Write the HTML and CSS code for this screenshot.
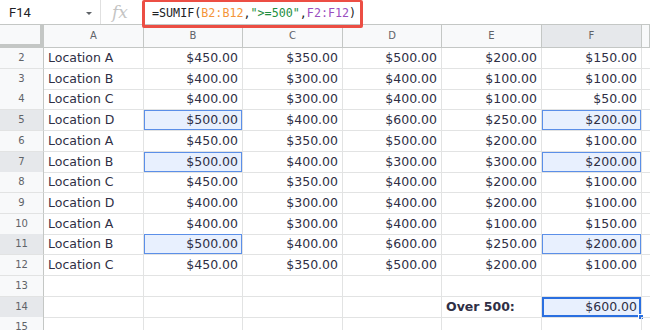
FILE: index.html
```html
<!DOCTYPE html>
<html lang="en">
<head>
    <meta charset="UTF-8">
    <title>Sheet - SUMIF</title>
    <link rel="stylesheet" href="styles.css">
</head>
<body>
    <div id="sheet">
        <!-- Formula bar -->
        <div class="formula-bar">
            <div class="name-box">F14<span class="caret"></span></div>
            <div class="fx">fx</div>
            <div class="formula"><span>=SUMIF(</span><span class="ref-b">B2:B12</span><span>,</span><span class="str">"&gt;=500"</span><span>,</span><span class="ref-f">F2:F12</span><span>)</span></div>
            <div class="annotation"></div>
        </div>

        <!-- Column headers -->
        <div class="row head">
            <div class="corner"></div>
            <div class="col">A</div>
            <div class="col">B</div>
            <div class="col">C</div>
            <div class="col">D</div>
            <div class="col">E</div>
            <div class="col sel">F</div>
            <div class="col"></div>
        </div>

        <div class="row"><div class="num">2</div><div class="cell">Location A</div><div class="cell r">$450.00</div><div class="cell r">$350.00</div><div class="cell r">$500.00</div><div class="cell r">$200.00</div><div class="cell r">$150.00</div><div class="cell"></div></div>
        <div class="row"><div class="num">3</div><div class="cell">Location B</div><div class="cell r">$400.00</div><div class="cell r">$300.00</div><div class="cell r">$400.00</div><div class="cell r">$100.00</div><div class="cell r">$100.00</div><div class="cell"></div></div>
        <div class="row"><div class="num">4</div><div class="cell">Location C</div><div class="cell r">$400.00</div><div class="cell r">$300.00</div><div class="cell r">$400.00</div><div class="cell r">$100.00</div><div class="cell r">$50.00</div><div class="cell"></div></div>
        <div class="row"><div class="num sel">5</div><div class="cell">Location D</div><div class="cell r hl">$500.00</div><div class="cell r">$400.00</div><div class="cell r">$600.00</div><div class="cell r">$250.00</div><div class="cell r hl">$200.00</div><div class="cell"></div></div>
        <div class="row"><div class="num">6</div><div class="cell">Location A</div><div class="cell r">$450.00</div><div class="cell r">$350.00</div><div class="cell r">$500.00</div><div class="cell r">$200.00</div><div class="cell r">$100.00</div><div class="cell"></div></div>
        <div class="row"><div class="num sel">7</div><div class="cell">Location B</div><div class="cell r hl">$500.00</div><div class="cell r">$400.00</div><div class="cell r">$300.00</div><div class="cell r">$300.00</div><div class="cell r hl">$200.00</div><div class="cell"></div></div>
        <div class="row"><div class="num">8</div><div class="cell">Location C</div><div class="cell r">$450.00</div><div class="cell r">$350.00</div><div class="cell r">$400.00</div><div class="cell r">$200.00</div><div class="cell r">$100.00</div><div class="cell"></div></div>
        <div class="row"><div class="num">9</div><div class="cell">Location D</div><div class="cell r">$400.00</div><div class="cell r">$300.00</div><div class="cell r">$400.00</div><div class="cell r">$200.00</div><div class="cell r">$100.00</div><div class="cell"></div></div>
        <div class="row"><div class="num">10</div><div class="cell">Location A</div><div class="cell r">$400.00</div><div class="cell r">$300.00</div><div class="cell r">$400.00</div><div class="cell r">$100.00</div><div class="cell r">$150.00</div><div class="cell"></div></div>
        <div class="row"><div class="num sel">11</div><div class="cell">Location B</div><div class="cell r hl">$500.00</div><div class="cell r">$400.00</div><div class="cell r">$600.00</div><div class="cell r">$250.00</div><div class="cell r hl">$200.00</div><div class="cell"></div></div>
        <div class="row"><div class="num">12</div><div class="cell">Location C</div><div class="cell r">$450.00</div><div class="cell r">$350.00</div><div class="cell r">$500.00</div><div class="cell r">$200.00</div><div class="cell r">$100.00</div><div class="cell"></div></div>
        <div class="row"><div class="num">13</div><div class="cell"></div><div class="cell"></div><div class="cell"></div><div class="cell"></div><div class="cell"></div><div class="cell"></div><div class="cell"></div></div>
        <div class="row"><div class="num sel">14</div><div class="cell"></div><div class="cell"></div><div class="cell"></div><div class="cell"></div><div class="cell b">Over 500:</div><div class="cell r active">$600.00<span class="handle"></span></div><div class="cell"></div></div>
        <div class="row"><div class="num">15</div><div class="cell"></div><div class="cell"></div><div class="cell"></div><div class="cell"></div><div class="cell"></div><div class="cell"></div><div class="cell"></div></div>
    </div>
</body>
</html>
```

FILE: styles.css
```css
* {
    box-sizing: border-box;
}
body {
    margin: 0;
    background: #fff;
    font-family: "DejaVu Sans", Verdana, sans-serif;
    color: #2f2f45;
    overflow: hidden;
}
#sheet {
    width: 650px;
}

/* formula bar */
.formula-bar {
    position: relative;
    display: flex;
    align-items: center;
    height: 25px;
    border-bottom: 1px solid #c4c7c5;
}
.name-box {
    position: relative;
    width: 101px;
    height: 100%;
    padding-left: 9px;
    display: flex;
    align-items: center;
    font-family: Roboto, "Liberation Sans", sans-serif;
    font-size: 13px;
    color: #202124;
    border-right: 1px solid #e0e0e0;
}
.caret {
    position: absolute;
    right: 8px;
    top: 12px;
    border-left: 3px solid transparent;
    border-right: 3px solid transparent;
    border-top: 3px solid #5f6368;
}
.fx {
    width: 41px;
    padding-left: 11px;
    font-family: "DejaVu Serif", "Liberation Serif", serif;
    font-style: italic;
    font-size: 17px;
    color: #c4c4c4;
}
.formula {
    padding-left: 10px;
    font-family: "DejaVu Sans Mono", "Liberation Mono", monospace;
    font-size: 11.7px;
    color: #202124;
    padding-top: 1px;
}
.ref-b { color: #f4953a; }
.str { color: #1e8e3e; }
.ref-f { color: #9a4fbf; }
.annotation {
    position: absolute;
    left: 142px;
    top: 0;
    width: 221px;
    height: 28px;
    border: 3px solid #ec4e44;
    border-top-width: 2px;
    border-radius: 2px;
}

/* grid */
.row {
    display: grid;
    grid-template-columns: 44px 100px 99px 100px 99px 100px 100px 1fr;
    height: 20.73px;
}
.row.head {
    height: 23px;
}
.corner {
    background: #f8f9fa;
    border-right: 4px solid #c4c7c5;
    border-bottom: 4px solid #c4c7c5;
}
.col {
    background: #f8f9fa;
    border-right: 1px solid #c4c7c5;
    border-bottom: 1px solid #c4c7c5;
    font-size: 10px;
    color: #5f6368;
    text-align: center;
    line-height: 22px;
}
.col.sel {
    background: #e6e8eb;
}
.num {
    background: #f8f9fa;
    border-right: 1px solid #c4c7c5;
    border-bottom: 1px solid #e2e3e3;
    font-size: 10px;
    color: #5f6368;
    text-align: center;
    line-height: 20px;
}
.num.sel {
    background: #e6e8eb;
}
.cell {
    position: relative;
    border-right: 1px solid #e2e3e3;
    border-bottom: 1px solid #e2e3e3;
    font-size: 12.5px;
    line-height: 20px;
    padding: 0 4px;
    white-space: nowrap;
}
.cell.r {
    text-align: right;
}
.cell.b {
    font-weight: bold;
}
.cell.hl {
    background: #e8f0fe;
    box-shadow: inset 0 0 0 1px #5b8fe8;
}
.cell.active {
    background: #e8f0fe;
    box-shadow: inset 0 0 0 2px #2a6fe0;
}
.handle {
    position: absolute;
    right: -3px;
    bottom: -3px;
    width: 6px;
    height: 6px;
    background: #2a6fe0;
    border: 1px solid #fff;
}
```
